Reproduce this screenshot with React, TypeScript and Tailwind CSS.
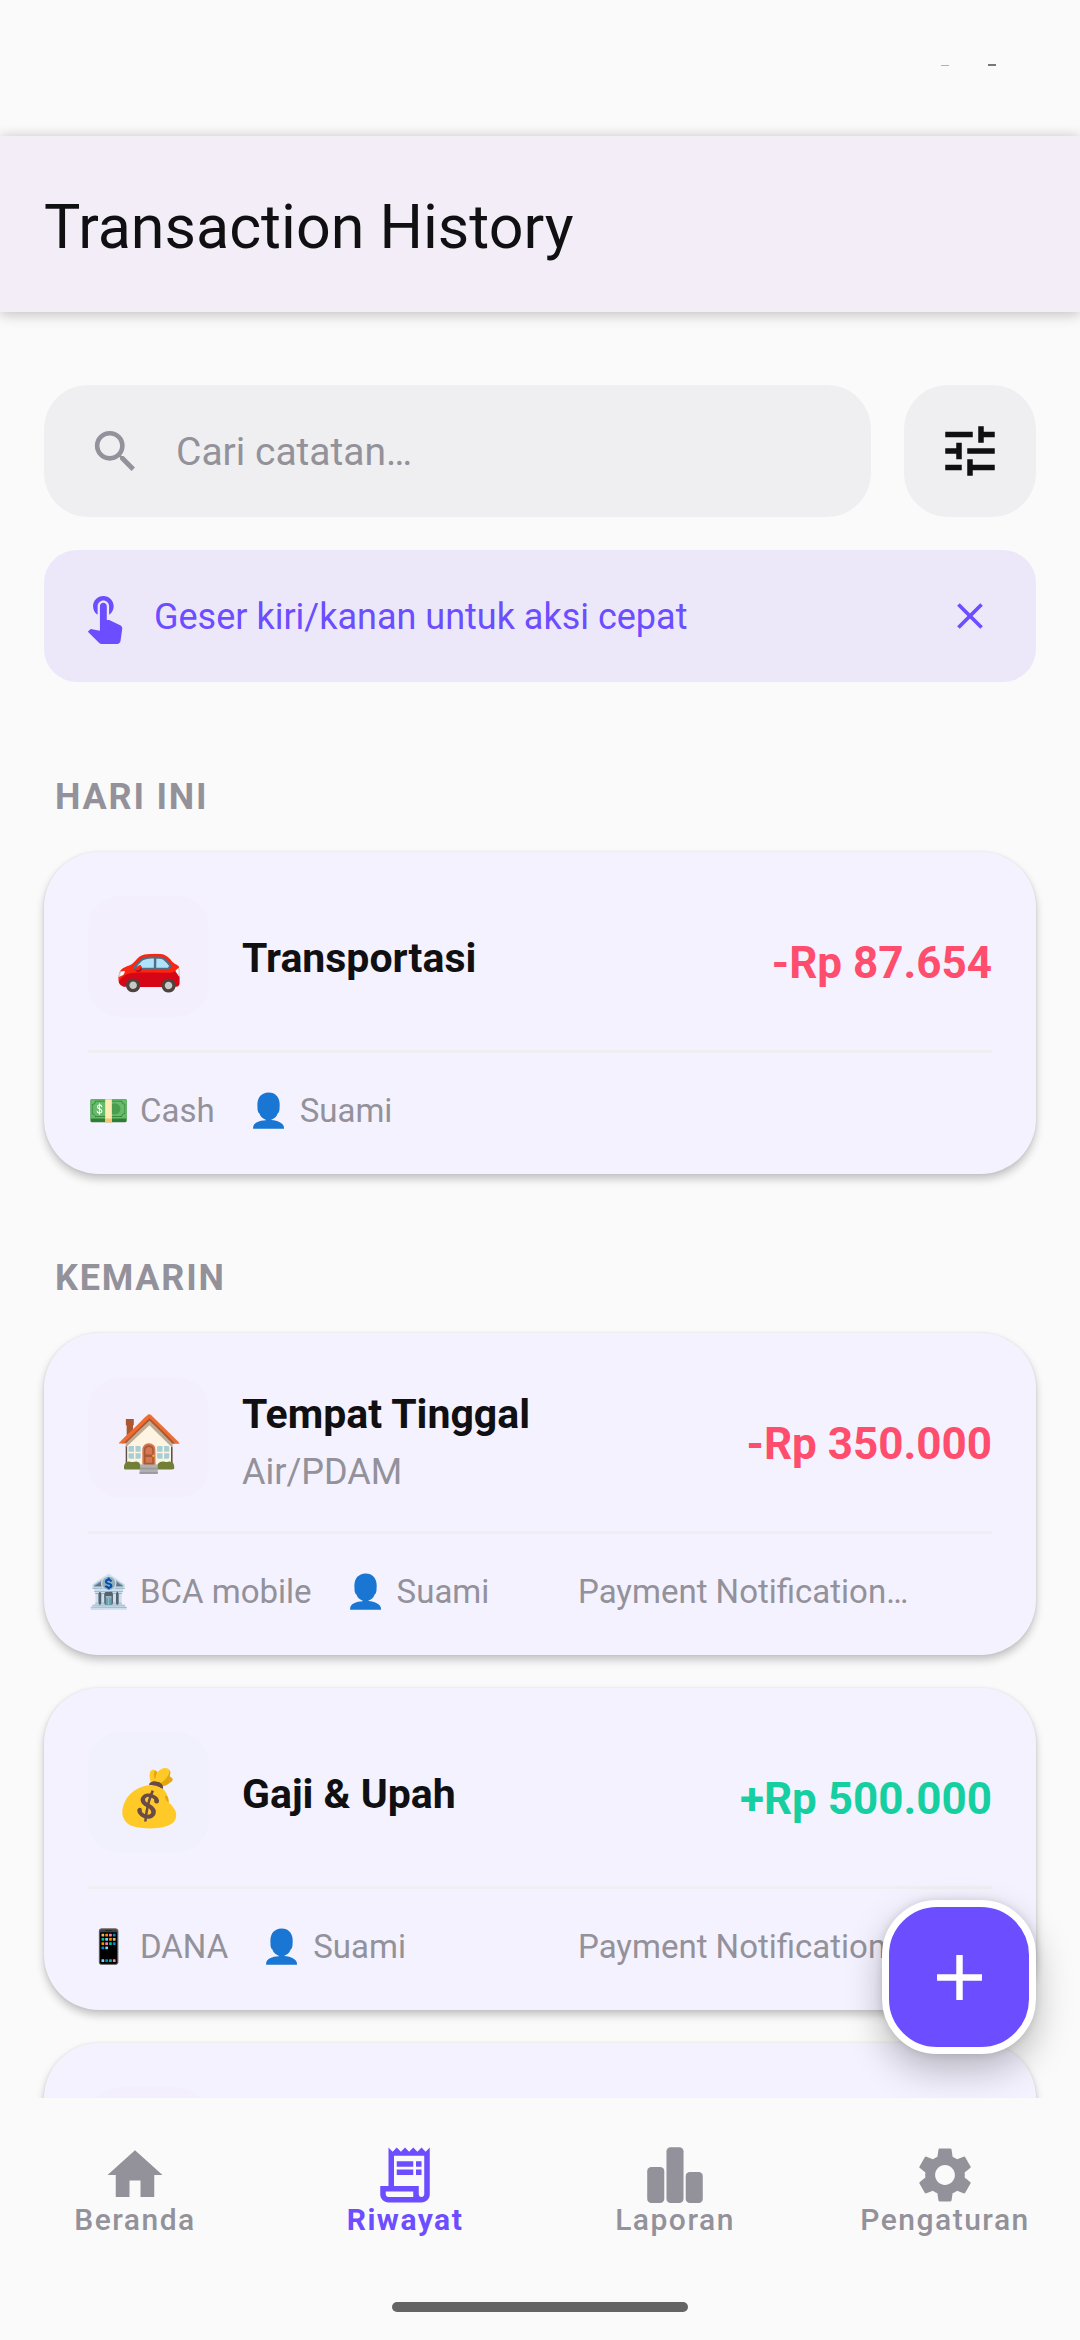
import React from 'react';
import { MdAdd, MdClose, MdSearch, MdSettings, MdTune } from 'react-icons/md';

interface Transaction {
  id: number;
  emoji: string;
  category: string;
  subcategory?: string;
  amount: string;
  income?: boolean;
  walletEmoji: string;
  wallet: string;
  owner: string;
  note?: string;
}

interface TransactionGroup {
  label: string;
  items: Transaction[];
}

const groups: TransactionGroup[] = [
  {
    label: 'HARI INI',
    items: [
      {
        id: 1,
        emoji: '🚗',
        category: 'Transportasi',
        amount: '-Rp 87.654',
        walletEmoji: '💵',
        wallet: 'Cash',
        owner: 'Suami'
      }
    ]
  },
  {
    label: 'KEMARIN',
    items: [
      {
        id: 2,
        emoji: '🏠',
        category: 'Tempat Tinggal',
        subcategory: 'Air/PDAM',
        amount: '-Rp 350.000',
        walletEmoji: '🏦',
        wallet: 'BCA mobile',
        owner: 'Suami',
        note: 'Payment Notification…'
      },
      {
        id: 3,
        emoji: '💰',
        category: 'Gaji & Upah',
        amount: '+Rp 500.000',
        income: true,
        walletEmoji: '📱',
        wallet: 'DANA',
        owner: 'Suami',
        note: 'Payment Notification…'
      }
    ]
  }
];

const TouchIcon = () => (
  <svg viewBox="0 0 24 24" fill="currentColor" className="size-[55px] shrink-0" aria-hidden="true">
    <path d="M9 11.24V7.5C9 6.12 10.12 5 11.5 5S14 6.12 14 7.5v3.74c1.21-.81 2-2.18 2-3.74C16 5.01 13.99 3 11.5 3S7 5.01 7 7.5c0 1.56.79 2.93 2 3.74zm9.84 4.63l-4.54-2.26c-.17-.07-.35-.11-.54-.11H13v-6c0-.83-.67-1.5-1.5-1.5S10 6.67 10 7.5v10.74l-3.43-.72c-.08-.01-.15-.03-.24-.03-.31 0-.59.13-.79.33l-.79.8 4.94 4.94c.27.27.65.44 1.06.44h6.79c.75 0 1.33-.55 1.44-1.28l.75-5.27c.01-.07.02-.14.02-.2 0-.62-.38-1.16-.91-1.38z" />
  </svg>
);

const HomeIcon = () => (
  <svg viewBox="0 0 24 24" fill="currentColor" className="size-[66px]" aria-hidden="true">
    <path d="M10 20v-6h4v6h5v-8h3L12 3 2 12h3v8z" />
  </svg>
);

const ReceiptIcon = () => (
  <svg viewBox="0 0 24 24" fill="currentColor" className="size-[66px]" aria-hidden="true">
    <path d="M19.5 3.5L18 2l-1.5 1.5L15 2l-1.5 1.5L12 2l-1.5 1.5L9 2 7.5 3.5 6 2v14H3v3c0 1.66 1.34 3 3 3h12c1.66 0 3-1.34 3-3V2l-1.5 1.5zM15 20H6c-.55 0-1-.45-1-1v-1h10v2zm4-1c0 .55-.45 1-1 1s-1-.45-1-1v-3H8V5h11v14z" />
    <path d="M9 7h6v2H9zM16 7h2v2h-2zM9 10h6v2H9zM16 10h2v2h-2z" />
  </svg>
);

const ChartIcon = () => (
  <svg viewBox="0 0 24 24" fill="currentColor" className="size-[66px]" aria-hidden="true">
    <rect x="1.9" y="9.1" width="6.2" height="13.1" rx="1.5" />
    <rect x="8.9" y="1.9" width="6.2" height="20.3" rx="1.5" />
    <rect x="15.9" y="10.9" width="6.2" height="11.3" rx="1.5" />
  </svg>
);

const navItems = [
  { label: 'Beranda', icon: <HomeIcon /> },
  { label: 'Riwayat', icon: <ReceiptIcon />, active: true },
  { label: 'Laporan', icon: <ChartIcon /> },
  { label: 'Pengaturan', icon: <MdSettings className="size-[66px]" /> }
];

const cardClass =
  'rounded-[55px] bg-[#f4f2ff] px-[44px] pt-[44px] pb-[41px] shadow-[0_0_3px_rgba(0,0,0,0.08),0_5px_9px_rgba(0,0,0,0.22)]';

const TransactionCard: React.FC<{ item: Transaction }> = ({ item }) => (
  <li className={cardClass}>
    <div className="flex h-[121px] items-center">
      <div
        className={`flex size-[121px] shrink-0 items-center justify-center rounded-[33px] pt-3 text-[55px] leading-none ${
          item.income ? 'bg-[#f0f1fd]' : 'bg-[#f4effc]'
        }`}
      >
        {item.emoji}
      </div>
      <div className="ml-[33px] flex flex-1 flex-col gap-[6px] pt-[3px]">
        <h3 className="text-[41px] leading-[60px] font-bold text-[#101012]">{item.category}</h3>
        {item.subcategory && (
          <p className="text-[36px] leading-[44px] text-[#93919a]">{item.subcategory}</p>
        )}
      </div>
      <p
        className={`pt-3 text-[44px] leading-[60px] font-bold ${
          item.income ? 'text-[#16cfa0]' : 'text-[#ff4d6d]'
        }`}
      >
        {item.amount}
      </p>
    </div>
    <hr className="mt-[33px] mb-[36px] border-t-3 border-[#efeff1]" />
    <div className="flex h-[44px] items-center gap-[33px] text-[33px] leading-[44px] text-[#93919a]">
      <span className="flex gap-[11px]">
        <span>{item.walletEmoji}</span>
        {item.wallet}
      </span>
      <span className="flex gap-[11px]">
        <span>👤</span>
        {item.owner}
      </span>
      {item.note && <span className="ml-auto w-[414px] truncate">{item.note}</span>}
    </div>
  </li>
);

export default function App() {
  return (
    <div className="flex h-screen flex-col overflow-hidden bg-[#fafafa] font-[Roboto,sans-serif] text-[#101012]">
      <div className="flex h-[136px] shrink-0 justify-end gap-[39px] pt-[64px] pr-[84px]" aria-hidden="true">
        <span className="mt-px h-px w-2 bg-[#b0b0b0]" />
        <span className="h-[2px] w-2 bg-[#777777]" />
      </div>

      <header className="flex h-[176px] shrink-0 items-center bg-[#f3edf7] px-[44px] pt-[6px] shadow-[0_0_12px_rgba(0,0,0,0.14),0_4px_14px_rgba(0,0,0,0.12)]">
        <h1 className="text-[61px] leading-[77px]">Transaction History</h1>
      </header>

      <div className="relative flex min-h-0 flex-1 flex-col">
        <main className="min-h-0 flex-1 overflow-hidden px-[44px] pt-[73px]">
          <div className="flex gap-[33px]">
            <label className="flex h-[132px] flex-1 items-center gap-[33px] rounded-[44px] bg-[#efeff1] px-[44px] text-[#93919a]">
              <MdSearch className="size-[55px] shrink-0" />
              <input
                type="text"
                aria-label="Cari catatan"
                placeholder="Cari catatan…"
                className="min-w-0 flex-1 bg-transparent pt-[3px] text-[39px] leading-[55px] text-[#101012] outline-none placeholder:text-[#93919a]"
              />
            </label>
            <button
              type="button"
              aria-label="Filter"
              className="flex size-[132px] items-center justify-center rounded-[44px] bg-[#efeff1]"
            >
              <MdTune className="size-[66px]" />
            </button>
          </div>

          <div className="mt-[33px] flex h-[132px] items-center gap-[22px] rounded-[33px] bg-[#ece8fa] px-[33px] text-[#6c4dff]">
            <TouchIcon />
            <p className="flex-1 pt-[3px] text-[36px] leading-[55px]">Geser kiri/kanan untuk aksi cepat</p>
            <button type="button" aria-label="Tutup" className="flex size-[66px] items-center justify-center">
              <MdClose className="size-[44px]" />
            </button>
          </div>

          <div className="mt-[91px] flex flex-col gap-[80px]">
            {groups.map((group, index) => (
              <section key={group.label}>
                <h2 className="px-[11px] text-[36px] leading-[48px] font-bold tracking-wider text-[#93919a]">
                  {group.label}
                </h2>
                <ul className="mt-[31px] flex flex-col gap-[33px]">
                  {group.items.map((item) => (
                    <TransactionCard key={item.id} item={item} />
                  ))}
                  {index === groups.length - 1 && (
                    <li className={cardClass}>
                      <div className="size-[121px] rounded-[33px] bg-[#f4effc]" />
                    </li>
                  )}
                </ul>
              </section>
            ))}
          </div>
        </main>

        <button
          type="button"
          aria-label="Tambah transaksi"
          className="absolute right-[44px] bottom-[44px] flex size-[154px] items-center justify-center rounded-[55px] border-7 border-white bg-[#6c4dff] text-white shadow-[0_0_8px_rgba(0,0,0,0.12),0_16px_36px_rgba(0,0,0,0.26)]"
        >
          <MdAdd className="size-[77px]" />
        </button>
      </div>

      <nav className="relative flex h-[242px] shrink-0 flex-col items-center bg-[#fafafa] pt-[44px]">
        <div className="grid w-full grid-cols-4">
          {navItems.map((item) => (
            <a
              key={item.label}
              href="#"
              aria-current={item.active ? 'page' : undefined}
              className={`flex flex-col items-center text-[30px] leading-[24px] tracking-wider ${
                item.active ? 'font-bold text-[#6c4dff]' : 'font-medium text-[#93919a]'
              }`}
            >
              {item.icon}
              {item.label}
            </a>
          ))}
        </div>
        <div className="mt-auto mb-7 h-[10px] w-[296px] rounded-full bg-[#646464]" />
      </nav>
    </div>
  );
}
